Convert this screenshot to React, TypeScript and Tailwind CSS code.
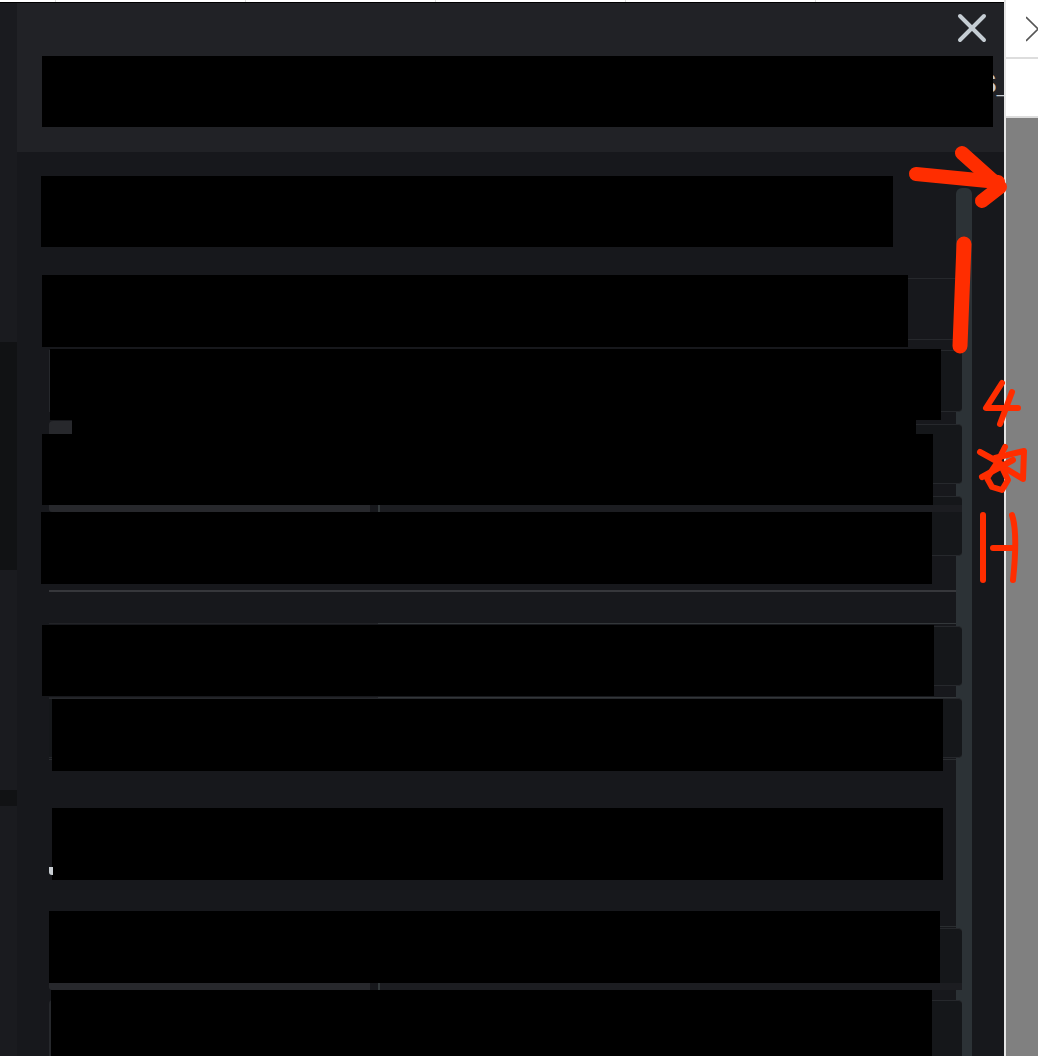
import { X } from "lucide-react";

const tickKeys = [0, 1, 2, 3, 4];

function Card({
  width = "w-[913px]",
  className = "",
  children,
}: {
  width?: string;
  className?: string;
  children?: React.ReactNode;
}) {
  return (
    <div
      className={`relative ml-[32px] shrink-0 border-y border-[#26282c] bg-[#15171a] ${width} ${className}`}
    >
      {children}
    </div>
  );
}

function Redacted({ className }: { className: string }) {
  return <div className={`absolute z-10 bg-black ${className}`} />;
}

function FieldStrip() {
  return (
    <div className="flex h-[7px]">
      <div className="w-[321px] rounded-bl-[3px] bg-[#27282c]" />
      <div className="w-[8px] bg-[#17181c]" />
      <div className="w-[2px] bg-[#33393b]" />
      <div className="flex-1 bg-[#1c1d21]" />
    </div>
  );
}

function SplitLine({ className = "" }: { className?: string }) {
  return (
    <div className={`ml-[32px] flex h-px w-[907px] shrink-0 ${className}`}>
      <div className="w-[329px] bg-[#222327]" />
      <div className="flex-1 bg-[#33373a]" />
    </div>
  );
}

function Annotations() {
  return (
    <svg
      className="pointer-events-none absolute left-0 top-0 z-20"
      width="1038"
      height="1056"
      viewBox="0 0 1038 1056"
      fill="none"
      stroke="#ff2d00"
      strokeLinecap="round"
      strokeLinejoin="round"
    >
      <path d="M916 174 L998 182" strokeWidth="14" />
      <path d="M962 153 L1000 187 L982 201" strokeWidth="14" />
      <path d="M964 244 L960 346" strokeWidth="15" />
      <g strokeWidth="6">
        <path d="M1002 383 L986 408 L1018 408" />
        <path d="M1012 392 L1000 424" />
        <path d="M980 452 L1000 463 L1008 480 L1002 490 L992 487 L987 478 L997 463 L1005 447" />
        <path d="M995 458 L1024 451 L1023 479 L1000 465" />
        <path d="M982 477 L1013 460" />
        <path d="M983 515 L983 580" />
        <path d="M1012 515 Q1018 533 1013 580" />
        <path d="M993 548 L1015 548" />
      </g>
    </svg>
  );
}

export default function App() {
  return (
    <div className="relative h-[1056px] w-[1038px] overflow-hidden bg-white font-['Liberation_Sans',sans-serif]">
      {/* page behind the modal */}
      <div className="flex h-[2px] bg-white pl-[55px]">
        {tickKeys.map((key) => (
          <div key={key} className="h-full w-[190px] border-l border-[#dddddd]" />
        ))}
      </div>
      <div className="h-px w-[1004px] bg-black" />

      <div className="flex h-[1053px]">
        <div className="flex w-[1004px] shrink-0">
          <div className="flex w-[17px] shrink-0 flex-col bg-[#1a1b1f]">
            <div className="h-[339px] shrink-0" />
            <div className="h-[228px] shrink-0 bg-[#111214]" />
            <div className="h-[220px] shrink-0" />
            <div className="h-[16px] shrink-0 bg-[#111214]" />
          </div>

          <div className="flex min-w-0 flex-1 flex-col">
            <header className="relative h-[149px] shrink-0 overflow-hidden bg-[#212226]">
              <span className="absolute left-[961px] top-[67px] text-[28px] font-bold leading-[28px] text-[#c5cad0]">
                S_
              </span>
              <div className="relative ml-[25px] mt-[53px] h-[71px] w-[951px] bg-black" />
              <button className="absolute right-[8px] top-[1px] text-[#c5cdd3]">
                <X size={48} strokeWidth={2} />
              </button>
            </header>

            <div className="relative flex min-h-0 flex-1 flex-col overflow-hidden bg-[#17181c] pt-[24px]">
              <div className="absolute bottom-0 left-[939px] top-[36px] w-[16px] rounded-t-[6px] bg-[#2c3236]" />

              <div className="relative ml-[24px] h-[71px] w-[852px] shrink-0 bg-black" />

              <Card width="w-[907px]" className="mt-[31px] h-[62px] border-[#2c2e32] !bg-[#17181c]">
                <Redacted className="-left-[7px] -top-[4px] h-[72px] w-[866px]" />
              </Card>

              <Card className="mt-[10px] h-[62px] rounded-r-[4px] border-l">
                <Redacted className="-top-[2px] left-0 h-[71px] w-[891px]" />
              </Card>

              <Card className="mt-[12px] h-[60px] rounded-r-[4px]">
                <div className="absolute -top-[4px] left-0 h-[13px] w-[23px] rounded-tl-[4px] bg-[#27282c]" />
                <Redacted className="-top-[5px] left-[23px] h-[14px] w-[844px]" />
                <Redacted className="-left-[7px] top-[9px] h-[71px] w-[891px]" />
              </Card>

              <Card className="mt-[12px] h-[60px] rounded-r-[4px] pt-[8px]">
                <FieldStrip />
                <Redacted className="-left-[8px] top-[15px] h-[72px] w-[891px]" />
              </Card>

              <div className="ml-[32px] mt-[34px] h-[2px] w-[907px] shrink-0 bg-[#36373b]" />
              <SplitLine className="mt-[31px]" />

              <Card className="mt-[2px] h-[60px] rounded-r-[4px]">
                <Redacted className="-left-[7px] -top-[2px] h-[71px] w-[892px]" />
              </Card>

              <Card className="mt-[12px] h-[60px] rounded-r-[4px]">
                <div className="absolute -top-[2px] left-0 h-px w-full">
                  <SplitLine className="!ml-0" />
                </div>
                <Redacted className="left-[3px] top-0 h-[72px] w-[891px]" />
              </Card>

              <div className="ml-[32px] mt-px h-px w-[907px] shrink-0 bg-[#2a2d30]" />

              <div className="relative h-[166px] shrink-0 pt-[48px]">
                <div className="relative z-10 ml-[35px] h-[72px] w-[891px] bg-black" />
                <div className="absolute left-[32px] top-[107px] z-10 h-[8px] w-[4px] rounded-bl-[3px] bg-[#c9ced3]" />
              </div>

              <div className="ml-[32px] h-px w-[907px] shrink-0 bg-[#2a2d30]" />

              <Card className="mt-px h-[60px] rounded-r-[4px] pt-[54px]">
                <FieldStrip />
                <Redacted className="-top-[18px] left-0 h-[72px] w-[891px]" />
              </Card>

              <Card className="mt-[12px] h-[70px] rounded-tl-[4px] rounded-tr-[4px] border-l-2 border-[#26282c]">
                <Redacted className="-top-[11px] left-0 h-[80px] w-[881px]" />
              </Card>
            </div>
          </div>
        </div>

        <div className="-mt-[3px] flex min-w-0 flex-1 flex-col border-l-2 border-[#e6e6e6]">
          <div className="flex h-[59px] shrink-0 items-center justify-end overflow-hidden border-b-2 border-[#dddddd] bg-white">
            <svg width="12" height="26" viewBox="0 0 12 26" fill="none" stroke="#555555" strokeWidth="1.6">
              <path d="M0 1 L12 13 L0 25" />
            </svg>
          </div>
          <div className="h-[59px] shrink-0 border-b-2 border-[#dddddd] bg-white" />
          <div className="flex-1 bg-[#808080]" />
        </div>
      </div>

      <Annotations />
    </div>
  );
}
